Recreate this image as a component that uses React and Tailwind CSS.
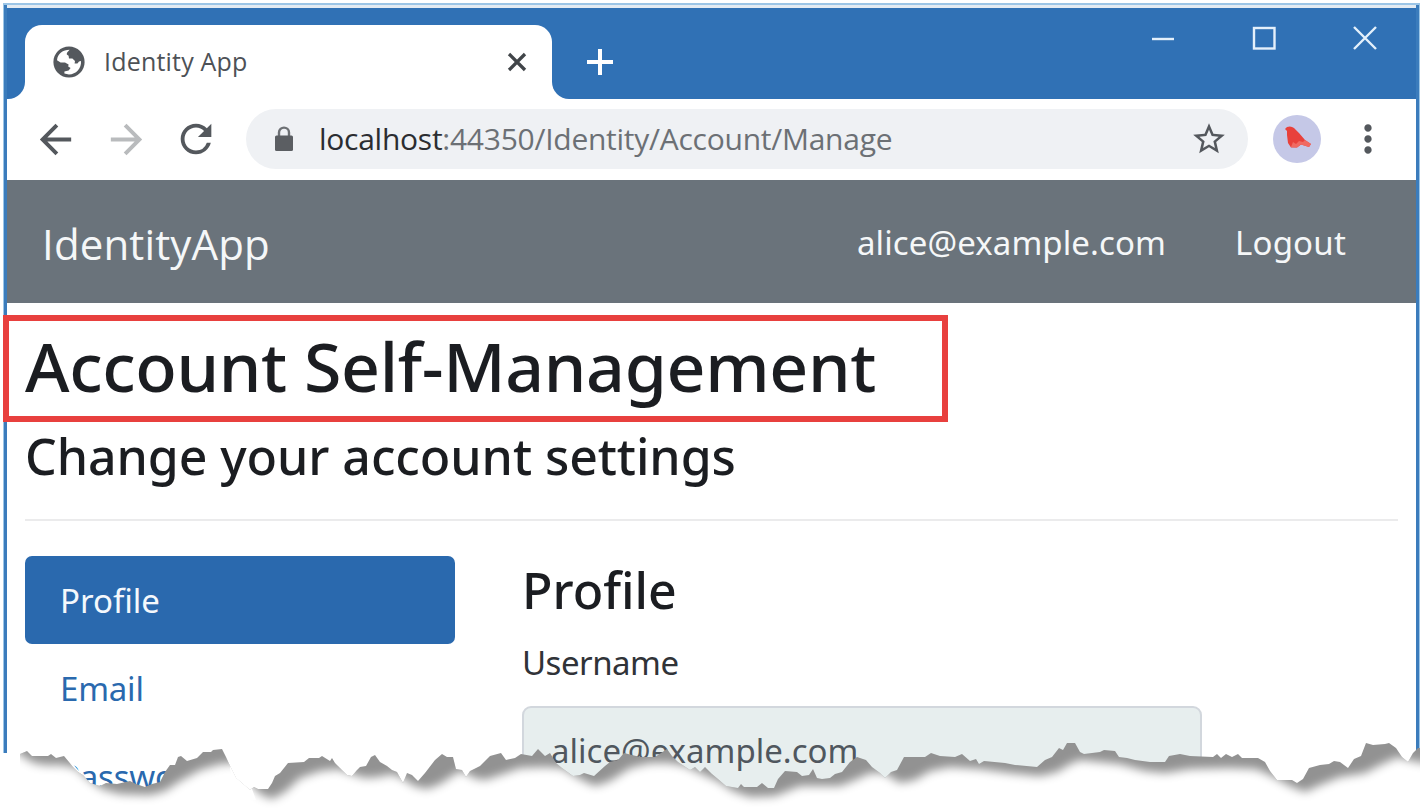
import {
  MdArrowBack,
  MdArrowForward,
  MdRefresh,
  MdStarBorder,
  MdMoreVert,
} from "react-icons/md";

const navItems = [
  { label: "Profile", active: true },
  { label: "Email", active: false },
  { label: "Password", active: false },
];

/* Upper outline of the torn paper edge, left to right. */
const TEAR_EDGE =
  "20,754 27,751 32,756 48,756 51,754 56,758 64,756 69,762 73,767 78,772 83,775 90,783 100,786 106,783 117,784 130,781 136,784 145,787 152,784 160,782 165,772 170,765 175,765 178,757 181,756 187,761 197,758 203,752 211,752 213,750 222,749 226,757 231,768 236,778 250,790 254,787 258,789 268,789 272,783 275,776 280,773 288,763 304,762 309,758 319,758 322,756 330,761 332,758 335,763 340,768 347,775 352,776 357,770 360,767 366,766 371,757 375,755 380,762 387,766 392,770 397,772 403,783 407,773 412,775 418,781 425,773 435,760 442,754 447,757 453,757 456,769 462,770 466,777 470,771 480,766 490,756 501,753 506,760 515,758 521,754 532,756 538,749 545,756 550,753 556,763 562,768 573,776 580,775 584,773 594,776 605,766 610,762 618,760 624,753 640,757 655,757 667,749 672,756 678,762 690,770 695,767 700,772 705,767 712,774 718,779 726,786 738,788 741,784 744,787 757,787 762,783 768,788 774,788 778,779 785,771 797,772 802,776 809,775 813,769 817,778 822,779 830,778 835,774 842,772 850,762 857,757 866,760 872,767 880,773 885,778 891,772 897,770 904,757 925,757 931,753 940,756 955,757 962,754 970,761 976,759 979,764 984,761 1005,763 1015,765 1037,767 1045,760 1052,757 1059,748 1063,750 1067,743 1075,743 1080,752 1084,754 1100,752 1104,750 1115,751 1119,757 1127,758 1135,760 1150,762 1165,762 1169,756 1180,754 1190,756 1213,757 1217,754 1221,758 1226,754 1232,757 1238,754 1242,758 1258,758 1265,762 1270,771 1277,780 1292,780 1297,783 1303,779 1309,768 1320,765 1329,764 1334,761 1340,762 1348,768 1354,759 1361,756 1366,743 1373,745 1385,744 1389,743 1396,748 1402,757 1408,762 1413,753 1418,748 1420,748";

/* Line along which the shadow under the tear has faded out. */
const TEAR_FADE =
  "0,748 14,749 24,756 34,762 46,764 62,764 76,767 88,778 102,788 120,793 150,794 165,790 180,780 200,769 220,763 234,762 240,764 250,782 260,793 272,798 285,791 300,777 320,770 338,768 352,773 365,777 378,776 392,773 402,777 414,785 427,788 440,783 452,775 460,770 466,772 474,777 485,779 500,774 520,767 545,766 562,767 580,778 595,785 610,780 630,767 650,762 670,762 685,765 700,772 718,780 733,790 750,796 775,795 800,785 820,785 840,785 855,779 870,772 884,772 900,782 915,779 930,770 950,766 980,768 1010,772 1040,775 1057,771 1070,763 1080,759 1090,760 1120,763 1145,770 1165,772 1190,768 1230,767 1256,768 1270,774 1290,785 1305,791 1320,784 1340,776 1365,772 1380,764 1398,756 1408,759 1423,762 1460,764";

function GlobeIcon() {
  return (
    <svg viewBox="0 0 32 32" className="size-8 shrink-0" aria-hidden="true">
      <circle cx="16" cy="16" r="15.6" fill="#54585d" />
      <path
        d="M4 14.2C4.6 7.8 10 3.8 16.6 3.8C15.2 5.6 13.4 6.4 13.8 8.6L15.6 9.8L16 12.6H19.4L22 15L21.6 17.6H24.4L26 15.4L28 15C28.6 22.6 23 28.4 16 28.4L11.4 27.4V25.4L15.6 24.6L17.6 22L15.2 20.6L15.6 18.4L12 16.6L7.6 16.4Z"
        fill="#fff"
      />
    </svg>
  );
}

function LockIcon() {
  return (
    <svg viewBox="0 0 18 26" className="h-[26px] w-[18px] shrink-0" aria-hidden="true">
      <path d="M4 10V6.5C4 0 14 0 14 6.5V10" fill="none" stroke="#6d7074" strokeWidth="2.4" />
      <rect x="0" y="9.5" width="18" height="15.5" rx="1.5" fill="#5b5e62" />
    </svg>
  );
}

function TabStrip() {
  return (
    <header className="flex h-[91px] shrink-0 justify-between bg-[#3071b5]">
      <div className="flex pt-[17px]">
        <div className="flex w-[18px] items-end bg-white">
          <div className="h-full w-full rounded-br-[17px] bg-[#3071b5]" />
        </div>
        <div className="flex bg-[#3071b5]">
          <div className="flex w-[527px] items-center rounded-t-[17px] bg-white pl-7 pr-[25px]">
            <GlobeIcon />
            <span className="ml-[19px] grow whitespace-nowrap text-[25px] tracking-[0.2px] text-[#4d5156]">
              Identity App
            </span>
            <svg viewBox="0 0 20 20" className="size-5" aria-hidden="true">
              <path d="M2 2L18 18M18 2L2 18" stroke="#414549" strokeWidth="3.3" />
            </svg>
          </div>
        </div>
        <div className="bg-white">
          <div className="flex h-full w-[120px] items-center rounded-bl-[17px] bg-[#3071b5] pl-[34px]">
            <svg viewBox="0 0 28 28" className="size-7" aria-hidden="true">
              <path d="M14 1V27M1 14H27" stroke="#fff" strokeWidth="4" />
            </svg>
          </div>
        </div>
      </div>
      <div className="flex gap-[77px] pr-[39px] pt-[18px]">
        <svg viewBox="0 0 24 24" className="size-6" aria-hidden="true">
          <path d="M1 13H23" stroke="#e4f0fb" strokeWidth="2.4" />
        </svg>
        <svg viewBox="0 0 24 24" className="size-6" aria-hidden="true">
          <rect x="2" y="2" width="20.5" height="20.5" fill="none" stroke="#e4f0fb" strokeWidth="2.4" />
        </svg>
        <svg viewBox="0 0 24 24" className="size-6" aria-hidden="true">
          <path d="M1 1L23 23M23 1L1 23" stroke="#e4f0fb" strokeWidth="2.4" />
        </svg>
      </div>
    </header>
  );
}

function Avatar() {
  return (
    <svg viewBox="0 0 48 48" className="size-12 shrink-0" aria-hidden="true">
      <circle cx="24" cy="24" r="24" fill="#c5c8e7" />
      <path d="M12 14L14 12Q18 10.5 21 13L26 18L32 25L38 29L36 32L28 29.5L24 32.5H18L15 28L14 20V16Z" fill="#e8413b" />
      <path d="M18 32L20 27L23 29L26 26L30 27L32 25L38 29L36 32L28 29.5L24 32.5Z" fill="#f06a62" />
    </svg>
  );
}

function Toolbar() {
  return (
    <div className="flex h-[81px] shrink-0 items-center bg-white pb-px pl-[25px]">
      <MdArrowBack className="size-[47px] shrink-0 text-[#54585d]" />
      <MdArrowForward className="ml-6 size-[47px] shrink-0 text-[#b9bbbd]" />
      <MdRefresh className="ml-[23px] size-[46px] shrink-0 text-[#54585d]" />
      <div className="ml-[27px] flex h-[60px] w-[1002px] items-center rounded-full bg-[#eff1f4] pl-[29px] pr-[20px]">
        <LockIcon />
        <span className="mb-0.5 ml-[26px] grow whitespace-nowrap text-[30px] tracking-[-0.26px] text-[#6c7075]">
          <span className="text-[#2b2d31]">localhost</span>:44350/Identity/Account/Manage
        </span>
        <MdStarBorder className="size-[38px] shrink-0 text-[#54585d]" />
      </div>
      <div className="ml-[25px]">
        <Avatar />
      </div>
      <MdMoreVert className="ml-[25px] size-[44px] shrink-0 text-[#54585d]" />
    </div>
  );
}

function NavBar() {
  return (
    <nav className="flex h-[123px] shrink-0 items-center justify-between bg-[#6a737b] pl-[35px] pr-[70px] text-[#f5f7f8]">
      <span className="mt-1 text-[42px] tracking-[0.15px]">IdentityApp</span>
      <div className="mt-[3px] flex gap-[69px] font-['Noto_Sans',sans-serif] text-[33px]">
        <span className="tracking-[0.1px]">alice@example.com</span>
        <span className="tracking-[0.2px]">Logout</span>
      </div>
    </nav>
  );
}

function AccountPage() {
  return (
    <main className="flex grow flex-col bg-white pl-[18px] pr-[18px] pt-[28px] font-['Noto_Sans',sans-serif] text-[#1b1d21]">
      <h1 className="h-[70px] whitespace-nowrap text-[68px] font-medium leading-[70px] tracking-[-0.35px]">
        Account Self-Management
      </h1>
      <h2 className="mt-[25px] h-[60px] whitespace-nowrap text-[50px] font-medium leading-[60px] tracking-[-0.07px]">
        Change your account settings
      </h2>
      <hr className="mt-[33px] border-t-2 border-[#ebebec]" />
      <div className="mt-[35px] flex gap-[67px]">
        <ul className="w-[430px] shrink-0 text-[33px] leading-[90px]">
          {navItems.map((item) => (
            <li
              key={item.label}
              className={
                item.active
                  ? "h-[88px] rounded-[7px] bg-[#2a69ae] pl-[35px] text-[#f4f8fc]"
                  : "h-[88px] pl-[35px] tracking-[-0.2px] text-[#2a69ae]"
              }
            >
              {item.label}
            </li>
          ))}
        </ul>
        <form className="flex w-[680px] shrink-0 flex-col">
          <h3 className="mt-[4px] h-[60px] text-[50px] font-medium leading-[60px]">
            Profile
          </h3>
          <label className="mt-[23px] h-[40px] text-[33px] leading-[40px] tracking-[-0.5px] text-[#303338]">
            Username
          </label>
          <div className="mt-[23px] h-[88px] rounded-[9px] border-[2px] border-[#d2d7dd] bg-[#e7eeee] pl-[27px] text-[33px] leading-[85px] text-[#50575e]">
            alice@example.com
          </div>
        </form>
      </div>
    </main>
  );
}

function TornEdge() {
  return (
    <svg
      viewBox="0 740 1423 69"
      className="absolute bottom-0 left-0 h-[69px] w-[1423px]"
      aria-hidden="true"
    >
      <defs>
        <clipPath id="tear-clip">
          <polygon points={`${TEAR_EDGE} 1420,809 20,809`} />
        </clipPath>
        <filter id="tear-blur" x="-5%" y="-50%" width="110%" height="200%">
          <feGaussianBlur stdDeviation="4.6" />
        </filter>
      </defs>
      <polygon points="0,753 20,753 20,809 0,809" fill="#fff" />
      <polygon points="56,757 66,756 73,764 78,770 83,776 92,788 56,788" fill="#fff" />
      <rect x="1420" y="748" width="3" height="61" fill="#fff" />
      <g clipPath="url(#tear-clip)">
        <rect x="0" y="740" width="1423" height="69" fill="#929292" />
        <g transform="translate(0 1)">
          <polygon points={`${TEAR_FADE} 1460,860 0,860`} fill="#fff" filter="url(#tear-blur)" />
        </g>
        <path d="M232 740L230 769L236 800L256 800L252 789L240 775V740Z" fill="#fff" />
      </g>
    </svg>
  );
}

export default function App() {
  return (
    <div className="relative flex h-[809px] w-[1423px] overflow-hidden bg-white pl-[3px] pr-[3px] pt-[3px] font-['Open_Sans',sans-serif]">
      <div className="flex w-full flex-col border-x border-t-2 border-[#9cc5e6]">
        <div className="flex grow flex-col border-x-[3px] border-[#3b7cbc]">
          <div className="h-[3px] shrink-0 bg-[#e3ebf3]" />
          <TabStrip />
          <Toolbar />
          <NavBar />
          <AccountPage />
        </div>
      </div>
      <div className="absolute left-[3px] top-[315px] h-[107px] w-[945px] border-[6px] border-[#e8403e]" />
      <TornEdge />
    </div>
  );
}
